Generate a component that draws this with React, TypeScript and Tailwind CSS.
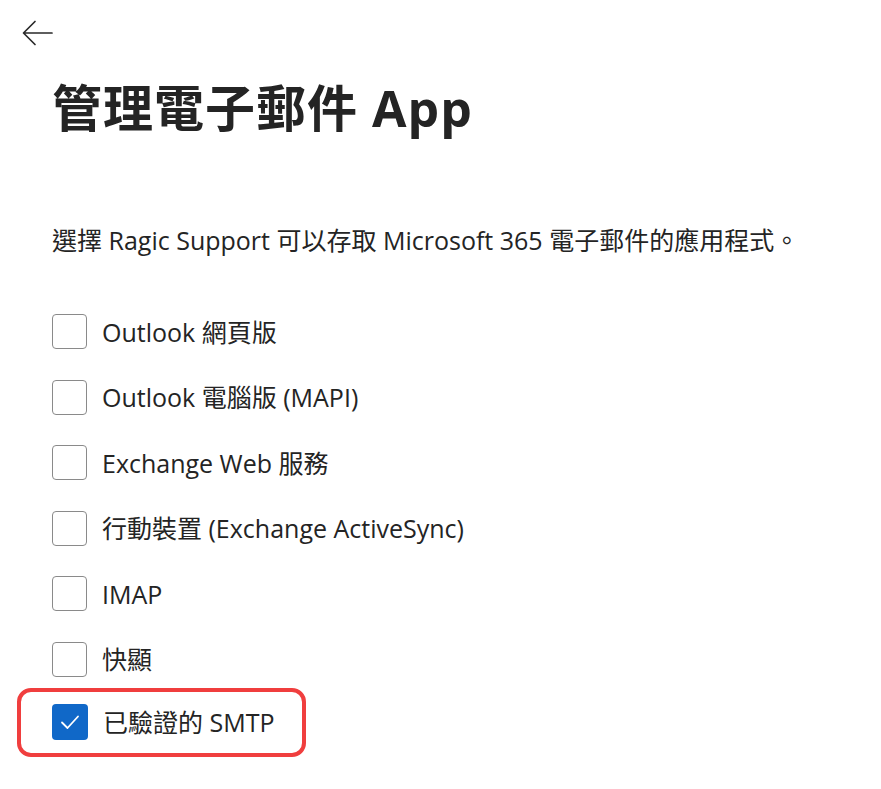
import React from "react";

const items = [
  "Outlook 網頁版",
  "Outlook 電腦版 (MAPI)",
  "Exchange Web 服務",
  "行動裝置 (Exchange ActiveSync)",
  "IMAP",
  "快顯",
];

const font = {
  fontFamily:
    '"Open Sans", "Noto Sans CJK TC", "Noto Sans", sans-serif',
};

export default function App() {
  return (
    <div
      className="w-[881px] h-[789px] bg-white text-[#242424] overflow-hidden"
      style={font}
    >
      <div className="pl-[22px] pt-[20px] h-[46px]">
        <svg width="31" height="26" viewBox="0 0 31 26" fill="none">
          <path
            d="M30 13H2M13 1.5L1.5 13l11.5 11.5"
            stroke="#2a2a2a"
            strokeWidth="1.7"
            strokeLinecap="round"
            strokeLinejoin="round"
          />
        </svg>
      </div>
      <h1 className="ml-[52px] mt-[32px] text-[50px] font-bold leading-[60px] tracking-[1px]">
        管理電子郵件 App
      </h1>
      <p className="ml-[52px] mt-[86px] text-[25px] leading-[32px]">
        選擇 Ragic Support 可以存取 Microsoft 365 電子郵件的應用程式。
      </p>
      <div className="mt-[58px] flex flex-col gap-[30.5px]">
        {items.map((t) => (
          <div key={t} className="ml-[52px] flex items-center h-[35px] gap-[15px]">
            <div className="w-[35px] h-[35px] rounded-[4px] border-[1.5px] border-[#8a8a8a] bg-white" />
            <span className="text-[25px] leading-[32px]">{t}</span>
          </div>
        ))}
      </div>
      <div className="mt-[11px] ml-[17px] w-[289px] h-[69px] rounded-[14px] border-[4px] border-[#f03e3e] flex items-center pl-[31px] gap-[15px]">
        <div className="w-[36px] h-[36px] rounded-[4px] bg-[#1068c8] flex items-center justify-center">
          <svg width="20" height="16" viewBox="0 0 20 16" fill="none">
            <path
              d="M2 8.5l5.5 5.5L18 2.5"
              stroke="white"
              strokeWidth="1.8"
              strokeLinecap="round"
              strokeLinejoin="round"
            />
          </svg>
        </div>
        <span className="text-[25px] leading-[32px]">已驗證的 SMTP</span>
      </div>
    </div>
  );
}
